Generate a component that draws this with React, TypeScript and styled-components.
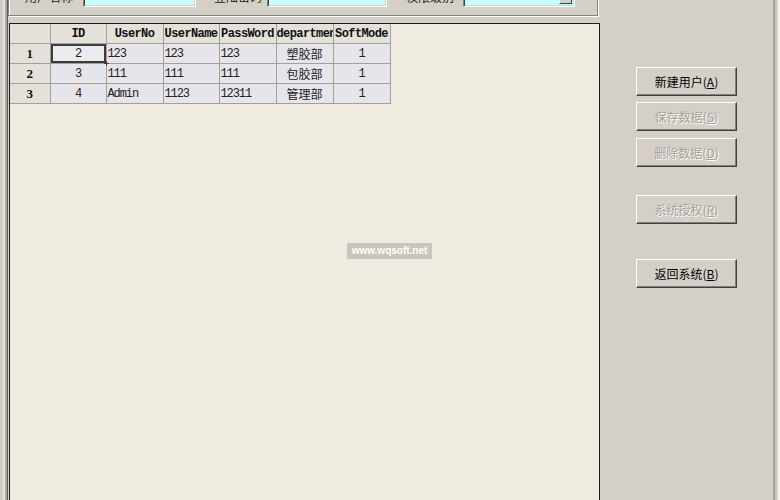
import styled, {createGlobalStyle} from 'styled-components';

const GlobalStyle = createGlobalStyle`
  html, body {
    margin: 0;
    padding: 0;
    background: #d4d0c8;
    overflow: hidden;
  }
`

const columns = [
    {title: 'ID', width: 56, align: 'center'},
    {title: 'UserNo', width: 57, align: 'left'},
    {title: 'UserName', width: 56, align: 'left'},
    {title: 'PassWord', width: 57, align: 'left'},
    {title: 'department', width: 57, align: 'center'},
    {title: 'SoftMode', width: 57, align: 'center'},
]

const users = [
    ['2', '123', '123', '123', '塑胶部', '1'],
    ['3', '111', '111', '111', '包胶部', '1'],
    ['4', 'Admin', '1123', '12311', '管理部', '1'],
]

const fields = [
    {label: '用户名称', offset: 16, gap: 10, width: 113, combo: false},
    {label: '登陆密码', offset: 18, gap: 5, width: 120, combo: false},
    {label: '权限级别', offset: 19, gap: 9, width: 112, combo: true},
]

const buttons = [
    {name: '新建用户', key: 'A', top: 67, disabled: false},
    {name: '保存数据', key: 'S', top: 6, disabled: true},
    {name: '删除数据', key: 'D', top: 7, disabled: true},
    {name: '系统授权', key: 'R', top: 28, disabled: true},
    {name: '返回系统', key: 'B', top: 35, disabled: false},
]

export default function App() {
    return (
        <>
            <GlobalStyle/>
            <Window>
                <LeftEdge/>
                <Main>
                    <GroupBox>
                        {fields.map(f => (
                            <Field key={f.label} $offset={f.offset} $gap={f.gap}>
                                <Label>{f.label}</Label>
                                <Input $w={f.width}>
                                    {f.combo && <DropButton/>}
                                </Input>
                            </Field>
                        ))}
                    </GroupBox>
                    <Grid>
                        <Table>
                            <colgroup>
                                <col style={{width: 40}}/>
                                {columns.map(c => <col key={c.title} style={{width: c.width}}/>)}
                            </colgroup>
                            <thead>
                            <tr>
                                <HeadCell/>
                                {columns.map(c => <HeadCell key={c.title}>{c.title}</HeadCell>)}
                            </tr>
                            </thead>
                            <tbody>
                            {users.map((row, i) => (
                                <tr key={i}>
                                    <RowHead>{i + 1}</RowHead>
                                    {row.map((v, j) => (
                                        <Cell key={j} $align={columns[j].align} $focus={i === 0 && j === 0}
                                              $cjk={j === 4}>
                                            {v}
                                        </Cell>
                                    ))}
                                </tr>
                            ))}
                            </tbody>
                        </Table>
                    </Grid>
                </Main>
                <Side>
                    {buttons.map(b => (
                        <WinButton key={b.key} $top={b.top} disabled={b.disabled}>
                            {b.name}(<u>{b.key}</u>)
                        </WinButton>
                    ))}
                </Side>
                <RightEdge/>
                <Watermark>www.wqsoft.net</Watermark>
            </Window>
        </>
    )
}

const Window = styled.div`
  position: relative;
  display: flex;
  width: 780px;
  height: 500px;
  overflow: hidden;
  background: #d4d0c8;
  font-family: "Noto Sans CJK SC", sans-serif;
`

const LeftEdge = styled.div`
  width: 8px;
  flex-shrink: 0;
  background: linear-gradient(to right,
  #cfccc4 0, #cfccc4 3px,
  #e6e4dc 3px, #e6e4dc 5px,
  #a8a6a0 5px, #a8a6a0 7px,
  #5a5a5a 7px, #5a5a5a 8px);
`

const RightEdge = styled.div`
  width: 7px;
  flex-shrink: 0;
  background: linear-gradient(to right,
  #a6a49e 0, #a6a49e 2px,
  #c4c2ba 2px, #c4c2ba 4px,
  #e6e6de 4px, #e6e6de 6px,
  #f6f6ee 6px);
`

const Main = styled.div`
  width: 592px;
  flex-shrink: 0;
  display: flex;
  flex-direction: column;
`

const GroupBox = styled.div`
  height: 40px;
  margin: -24px 2px 0 0;
  box-sizing: border-box;
  border: 1px solid #808080;
  box-shadow: inset 1px 1px #ffffff, 1px 1px #ffffff;
  display: flex;
  align-items: flex-end;
  padding: 0 0 8px 0;
`

const Field = styled.div<{ $offset: number, $gap: number }>`
  display: flex;
  align-items: flex-end;
  margin-left: ${p => p.$offset}px;
  gap: ${p => p.$gap}px;
`

const Label = styled.span`
  width: 48px;
  font-size: 12px;
  line-height: 14px;
  color: #222;
  white-space: nowrap;
  transform: translateY(-3px);
`

const Input = styled.div<{ $w: number }>`
  position: relative;
  width: ${p => p.$w}px;
  height: 20px;
  box-sizing: border-box;
  background: #ccfcfc;
  border-top: 1px solid #808080;
  border-left: 1px solid #808080;
  border-right: 1px solid #ffffff;
  border-bottom: 1px solid #ffffff;
  box-shadow: inset 1px 1px #404040, inset -1px -1px #d4d0c8;
`

const DropButton = styled.div`
  position: absolute;
  right: 2px;
  top: 2px;
  bottom: 2px;
  width: 13px;
  background: #d4d0c8;
  border-top: 1px solid #ffffff;
  border-left: 1px solid #ffffff;
  border-right: 1px solid #404040;
  border-bottom: 1px solid #404040;
  box-sizing: border-box;
`

const Grid = styled.div`
  position: relative;
  flex: 1;
  margin: 7px 0 -4px 1px;
  border: 1px solid #1c1c1c;
  background: #efebe1;
`

const Table = styled.table`
  border-collapse: collapse;
  table-layout: fixed;
  width: 380px;
  margin: 0;
`

const HeadCell = styled.th`
  height: 19px;
  padding: 0;
  background: #e4e1da;
  border: 1px solid #a3a09a;
  border-top: none;
  font-family: "Liberation Mono", monospace;
  font-weight: bold;
  font-size: 12px;
  letter-spacing: -0.6px;
  color: #111;
  text-align: center;
  white-space: nowrap;
  overflow: hidden;

  &:first-child {
    border-left: none;
  }
`

const RowHead = styled.td`
  height: 19px;
  padding: 0;
  background: #e4e1da;
  border: 1px solid #a3a09a;
  border-left: none;
  font-family: "Liberation Serif", serif;
  font-weight: bold;
  font-size: 13px;
  color: #111;
  text-align: center;
`

const Cell = styled.td<{ $align: string, $focus: boolean, $cjk: boolean }>`
  position: relative;
  height: 19px;
  padding: 0 1px;
  background: ${p => p.$focus ? '#ecebf0' : '#e7e5ec'};
  border: 1px solid #a3a09a;
  font-family: ${p => p.$cjk ? '"Noto Sans CJK SC", sans-serif' : '"Liberation Mono", monospace'};
  font-size: 12px;
  letter-spacing: ${p => p.$cjk ? '0' : '-1.1px'};
  color: #222;
  text-align: ${p => p.$align};
  white-space: nowrap;
  overflow: ${p => p.$focus ? 'visible' : 'hidden'};
  box-shadow: ${p => p.$focus ? 'inset 0 0 0 2px #3c3c3c' : 'none'};

  &::after {
    content: '';
    display: ${p => p.$focus ? 'block' : 'none'};
    position: absolute;
    right: -3px;
    bottom: -3px;
    width: 5px;
    height: 5px;
    background: #3c3c3c;
  }
`

const Side = styled.div`
  flex: 1;
  display: flex;
  flex-direction: column;
  align-items: flex-start;
  padding-left: 36px;
`

const WinButton = styled.button`
  margin-top: ${p => (p as any).$top}px;
  width: 101px;
  height: 29px;
  padding: 0;
  background: #d4d0c8;
  border-top: 1px solid #ffffff;
  border-left: 1px solid #ffffff;
  border-right: 1px solid #404040;
  border-bottom: 1px solid #404040;
  box-shadow: inset -1px -1px #808080;
  font-family: "Noto Sans CJK SC", sans-serif;
  font-size: 12px;
  color: #000;

  &:disabled {
    color: #a4a09a;
    text-shadow: 1px 1px #ffffff;
  }
` as any

const Watermark = styled.div`
  position: absolute;
  left: 347px;
  top: 243px;
  width: 85px;
  height: 16px;
  background: #c9c6bd;
  color: #ffffff;
  font-family: "Liberation Sans", sans-serif;
  font-weight: bold;
  font-size: 10px;
  line-height: 16px;
  text-align: center;
  white-space: nowrap;
`
